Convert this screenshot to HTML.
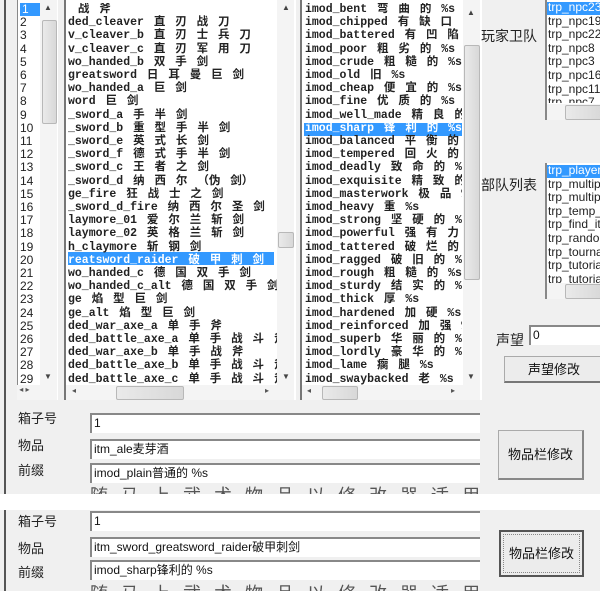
<!DOCTYPE html>
<html><head><meta charset="utf-8"><style>
html,body{margin:0;width:600px;height:591px;overflow:hidden}
body{background:#f0f0f0;position:relative;font-family:"Liberation Sans","Noto Sans CJK SC",sans-serif;}
.a{position:absolute}
.w{background:#fff}
.mono{font-family:"Liberation Mono","Noto Sans CJK SC",monospace;font-size:11.5px;line-height:13.2px;color:#222;white-space:pre;font-weight:bold;word-spacing:3px}
.sel{background:#3399ff;color:#fff}
.sb{background:#f4f4f4;}
.th{background:linear-gradient(90deg,#eaeaea,#d8d8d8);border:1px solid #b8b8b8;border-radius:2px}
.inp{background:#fff;border-top:2px solid #888;border-left:2px solid #888;font-size:12px;line-height:16px;padding-left:2px;color:#111;box-sizing:border-box;overflow:hidden}
.lbl{font-size:13px;color:#222}
.sm{font-size:12px;line-height:13.6px;color:#222;white-space:pre;overflow:hidden}
.btn{background:#ececec;border:1px solid #aaa;box-sizing:border-box;font-size:13px;text-align:center;color:#111}
</style></head><body>
<div class="a" style="left:4px;top:0;width:2px;height:591px;background:#555"></div>
<!-- number list -->
<div class="a w" style="left:17px;top:0;width:40px;height:400px;border-left:1px solid #888"></div>
<div class="a mono" style="left:20px;top:3px;width:20px;font-weight:normal;font-family:'Liberation Sans',sans-serif;font-size:12px;word-spacing:0">1
2
3
4
5
6
7
8
9
10
11
12
13
14
15
16
17
18
19
20
21
22
23
24
25
26
27
28
29</div>
<div class="a sel" style="left:20px;top:3px;width:20px;height:13px"></div>
<div class="a" style="left:22px;top:3px;color:#fff;font-size:12px;line-height:13px">1</div>
<div class="a sb" style="left:40px;top:0;width:17px;height:385px"></div>
<div class="a th" style="left:42px;top:20px;width:13px;height:102px"></div>
<div class="a" style="left:44px;top:3px;font-size:8px;color:#444">▲</div>
<div class="a" style="left:44px;top:372px;font-size:8px;color:#444">▼</div>
<div class="a sb" style="left:17px;top:385px;width:40px;height:15px;font-size:8px;color:#555">&nbsp;◂ ▸</div>
<!-- item list -->
<div class="a w" style="left:64px;top:0;width:230px;height:400px;border-left:2px solid #777"></div>
<div class="a sel" style="left:68px;top:252px;width:206px;height:13px"></div>
<div class="a mono" style="left:68px;top:3px;width:209px;overflow:hidden;height:382px"> 战 斧
ded_cleaver 直 刃 战 刀
v_cleaver_b 直 刃 士 兵 刀
v_cleaver_c 直 刃 军 用 刀
wo_handed_b 双 手 剑
greatsword 日 耳 曼 巨 剑
wo_handed_a 巨 剑
word 巨 剑
_sword_a 手 半 剑
_sword_b 重 型 手 半 剑
_sword_e 英 式 长 剑
_sword_f 德 式 手 半 剑
_sword_c 王 者 之 剑
_sword_d 纳 西 尔 （伪 剑）
ge_fire 狂 战 士 之 剑
_sword_d_fire 纳 西 尔 圣 剑
laymore_01 爱 尔 兰 斩 剑
laymore_02 英 格 兰 斩 剑
h_claymore 斩 钢 剑
<span style="color:#fff">reatsword_raider 破 甲 刺 剑</span>
wo_handed_c 德 国 双 手 剑
wo_handed_c_alt 德 国 双 手 剑
ge 焰 型 巨 剑
ge_alt 焰 型 巨 剑
ded_war_axe_a 单 手 斧
ded_battle_axe_a 单 手 战 斗 斧
ded_war_axe_b 单 手 战 斧
ded_battle_axe_b 单 手 战 斗 斧
ded_battle_axe_c 单 手 战 斗 斧
_sword_d 纳 西 尔</div>
<div class="a sb" style="left:277px;top:0;width:17px;height:385px"></div>
<div class="a th" style="left:278px;top:232px;width:14px;height:14px"></div>
<div class="a" style="left:282px;top:3px;font-size:8px;color:#444">▲</div>
<div class="a" style="left:282px;top:372px;font-size:8px;color:#444">▼</div>
<div class="a sb" style="left:66px;top:385px;width:228px;height:15px"></div>
<div class="a th" style="left:116px;top:386px;width:66px;height:12px"></div>
<div class="a" style="left:72px;top:386px;font-size:8px;color:#555">◂</div>
<div class="a" style="left:265px;top:386px;font-size:8px;color:#555">▸</div>
<!-- modifier list -->
<div class="a w" style="left:300px;top:0;width:180px;height:400px;border-left:2px solid #777"></div>
<div class="a sel" style="left:304px;top:123px;width:158px;height:13px"></div>
<div class="a mono" style="left:305px;top:3px;width:157px;overflow:hidden;height:382px">imod_bent 弯 曲 的 %s
imod_chipped 有 缺 口 的
imod_battered 有 凹 陷
imod_poor 粗 劣 的 %s
imod_crude 粗 糙 的 %s
imod_old 旧 %s
imod_cheap 便 宜 的 %s
imod_fine 优 质 的 %s
imod_well_made 精 良 的
<span style="color:#fff">imod_sharp 锋 利 的 %s</span>
imod_balanced 平 衡 的
imod_tempered 回 火 的
imod_deadly 致 命 的 %s
imod_exquisite 精 致 的
imod_masterwork 极 品 %s
imod_heavy 重 %s
imod_strong 坚 硬 的 %s
imod_powerful 强 有 力
imod_tattered 破 烂 的
imod_ragged 破 旧 的 %s
imod_rough 粗 糙 的 %s
imod_sturdy 结 实 的 %s
imod_thick 厚 %s
imod_hardened 加 硬 %s
imod_reinforced 加 强 %s
imod_superb 华 丽 的 %s
imod_lordly 豪 华 的 %s
imod_lame 瘸 腿 %s
imod_swaybacked 老 %s
imod_spirited 有 精 神</div>
<div class="a sb" style="left:463px;top:0;width:17px;height:385px"></div>
<div class="a th" style="left:464px;top:45px;width:14px;height:233px"></div>
<div class="a" style="left:467px;top:8px;font-size:8px;color:#444">▲</div>
<div class="a" style="left:467px;top:372px;font-size:8px;color:#444">▼</div>
<div class="a sb" style="left:302px;top:385px;width:178px;height:15px"></div>
<div class="a th" style="left:322px;top:386px;width:34px;height:12px"></div>
<div class="a" style="left:307px;top:386px;font-size:8px;color:#555">◂</div>
<div class="a" style="left:451px;top:386px;font-size:8px;color:#555">▸</div>
<!-- right -->
<div class="a lbl" style="left:481px;top:26px;font-size:14px">玩家卫队</div>
<div class="a lbl" style="left:481px;top:175px;font-size:14px">部队列表</div>
<div class="a w" style="left:545px;top:0;width:55px;height:120px;border-left:2px solid #888"></div>
<div class="a sel" style="left:547px;top:2px;width:53px;height:13px"></div>
<div class="a sm" style="left:548px;top:1px;width:52px;height:102px"><span style="color:#fff">trp_npc23</span>
trp_npc19
trp_npc22
trp_npc8
trp_npc3
trp_npc16
trp_npc11
trp_npc7</div>
<div class="a sb" style="left:547px;top:104px;width:53px;height:16px"></div>
<div class="a th" style="left:565px;top:105px;width:35px;height:13px"></div>
<div class="a w" style="left:545px;top:163px;width:55px;height:136px;border-left:2px solid #888"></div>
<div class="a sel" style="left:547px;top:165px;width:53px;height:13px"></div>
<div class="a sm" style="left:548px;top:164px;width:52px;height:120px"><span style="color:#fff">trp_player</span>
trp_multipl
trp_multipl
trp_temp_t
trp_find_ite
trp_randor
trp_tourna
trp_tutorial
trp_tutorial</div>
<div class="a sb" style="left:547px;top:283px;width:53px;height:16px"></div>
<div class="a th" style="left:565px;top:284px;width:35px;height:13px"></div>
<div class="a lbl" style="left:496px;top:330px;font-size:14px">声望</div>
<div class="a inp" style="left:529px;top:325px;width:71px;height:20px">0</div>
<div class="a btn" style="left:504px;top:356px;width:100px;height:27px;line-height:25px;border-bottom:2px solid #777">声望修改</div>
<!-- panel 1 -->
<div class="a lbl" style="left:18px;top:408px">箱子号</div>
<div class="a lbl" style="left:18px;top:435px">物品</div>
<div class="a lbl" style="left:18px;top:460px">前缀</div>
<div class="a inp" style="left:90px;top:413px;width:390px;height:20px">1</div>
<div class="a inp" style="left:90px;top:439px;width:390px;height:20px">itm_ale麦芽酒</div>
<div class="a inp" style="left:90px;top:463px;width:390px;height:20px">imod_plain普通的 %s</div>
<div class="a btn" style="left:498px;top:430px;width:86px;height:50px;line-height:48px;border-right:2px solid #888;border-bottom:2px solid #888">物品栏修改</div>
<div class="a" style="left:90px;top:486px;width:400px;height:9px;overflow:hidden"><div style="font-size:18px;line-height:20px;color:#555;letter-spacing:4px;white-space:nowrap">随 马 上 武 术 物 品 以 修 改 器 适 用 仿 仿 版</div></div>
<div class="a w" style="left:0;top:494px;width:600px;height:16px"></div>
<!-- panel 2 -->
<div class="a lbl" style="left:18px;top:511px">箱子号</div>
<div class="a lbl" style="left:18px;top:538px">物品</div>
<div class="a lbl" style="left:18px;top:562px">前缀</div>
<div class="a inp" style="left:90px;top:511px;width:390px;height:20px">1</div>
<div class="a inp" style="left:90px;top:537px;width:390px;height:20px">itm_sword_greatsword_raider破甲刺剑</div>
<div class="a inp" style="left:90px;top:560px;width:390px;height:20px">imod_sharp锋利的 %s</div>
<div class="a btn" style="left:499px;top:530px;width:85px;height:47px;line-height:43px;border:2px solid #555;outline:1px dotted #888;outline-offset:-5px">物品栏修改</div>
<div class="a" style="left:90px;top:584px;width:400px;height:7px;overflow:hidden"><div style="font-size:18px;line-height:20px;color:#555;letter-spacing:4px;white-space:nowrap">随 马 上 武 术 物 品 以 修 改 器 适 用 仿 仿 版</div></div>
</body></html>
